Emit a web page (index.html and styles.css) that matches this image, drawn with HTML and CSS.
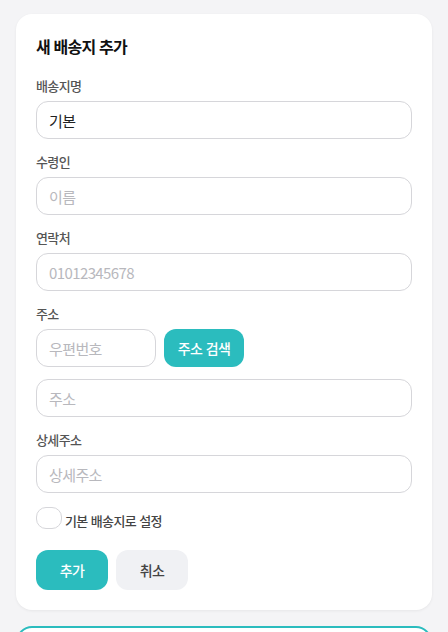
FILE: index.html
```html
<!DOCTYPE html>
<html lang="ko">
<head>
<meta charset="utf-8">
<link rel="stylesheet" href="styles.css">
</head>
<body>
<div class="page">
  <form class="card">
    <h2 class="title">새 배송지 추가</h2>
    <div class="field">
      <label class="label">배송지명</label>
      <input class="input" type="text" value="기본">
    </div>
    <div class="field">
      <label class="label">수령인</label>
      <input class="input" type="text" placeholder="이름">
    </div>
    <div class="field">
      <label class="label">연락처</label>
      <input class="input" type="text" placeholder="01012345678">
    </div>
    <div class="field">
      <label class="label">주소</label>
      <div class="zip-row">
        <input class="input zip" type="text" placeholder="우편번호">
        <button type="button" class="btn btn-primary btn-search">주소 검색</button>
      </div>
      <input class="input addr" type="text" placeholder="주소">
    </div>
    <div class="field">
      <label class="label">상세주소</label>
      <input class="input" type="text" placeholder="상세주소">
    </div>
    <label class="check-row"><input class="check" type="checkbox"><span class="check-text">기본 배송지로 설정</span></label>
    <div class="actions">
      <button type="button" class="btn btn-primary btn-action">추가</button>
      <button type="button" class="btn btn-secondary btn-action">취소</button>
    </div>
  </form>
  <div class="card-next"></div>
</div>
</body>
</html>
```
FILE: styles.css
```css
* { box-sizing: border-box; }
html, body { margin: 0; padding: 0; }
body {
  background: #f4f4f6;
  font-family: "Noto Sans CJK KR", "Noto Sans", sans-serif;
  color: #111;
  overflow: hidden;
  height: 632px;
}
.page {
  height: 632px;
  overflow: hidden;
  padding: 14px 16px 0;
  display: flex;
  flex-direction: column;
  gap: 16px;
}
.card {
  flex: none;
  background: #fff;
  border-radius: 16px;
  padding: 20px 20px 20px;
  box-shadow: 0 1px 3px rgba(0,0,0,0.06);
  display: flex;
  flex-direction: column;
}
.title {
  margin: 0 0 17px;
  font-size: 16px;
  line-height: 25px;
  font-weight: 700;
  letter-spacing: -0.8px;
  color: #111;
}
.field {
  display: flex;
  flex-direction: column;
  margin-bottom: 13px;
}
.label {
  font-size: 13px;
  line-height: 20px;
  font-weight: 500;
  color: #555;
  letter-spacing: -0.6px;
  margin-bottom: 5px;
}
.input {
  height: 38px;
  width: 100%;
  border: 1px solid #d6d6da;
  border-radius: 12px;
  padding: 0 12px;
  font-family: inherit;
  font-size: 15px;
  color: #222;
  letter-spacing: -0.6px;
  background: #fff;
  outline: none;
}
.input::placeholder { color: #b8b8bd; }
.zip-row {
  display: flex;
  gap: 8px;
  margin-bottom: 12px;
}
.input.zip { width: 120px; flex: none; }
.btn {
  border: none;
  font-family: inherit;
  font-size: 14px;
  font-weight: 500;
  letter-spacing: -0.6px;
  cursor: pointer;
}
.btn-primary { background: #2bbcbe; color: #fff; }
.btn-secondary { background: #f0f1f4; color: #444; }
.btn-search {
  width: 80px;
  height: 38px;
  border-radius: 12px;
  padding: 0;
}
.check-row {
  display: flex;
  align-items: flex-end;
  margin-top: 1px;
  margin-bottom: 21px;
}
.check {
  appearance: none;
  -webkit-appearance: none;
  margin: 0 3px 0 0;
  width: 26px;
  height: 22px;
  border: 1px solid #d6d6da;
  border-radius: 10px;
  background: #fff;
}
.check-text {
  font-size: 13px;
  line-height: 16px;
  color: #444;
  letter-spacing: -0.6px;
  font-weight: 500;
}
.actions {
  display: flex;
  gap: 8px;
}
.btn-action {
  width: 72px;
  height: 40px;
  border-radius: 12px;
}
.card-next {
  flex: none;
  height: 60px;
  border: 2px solid #2bbcbe;
  border-radius: 16px;
  background: #fff;
}
```
